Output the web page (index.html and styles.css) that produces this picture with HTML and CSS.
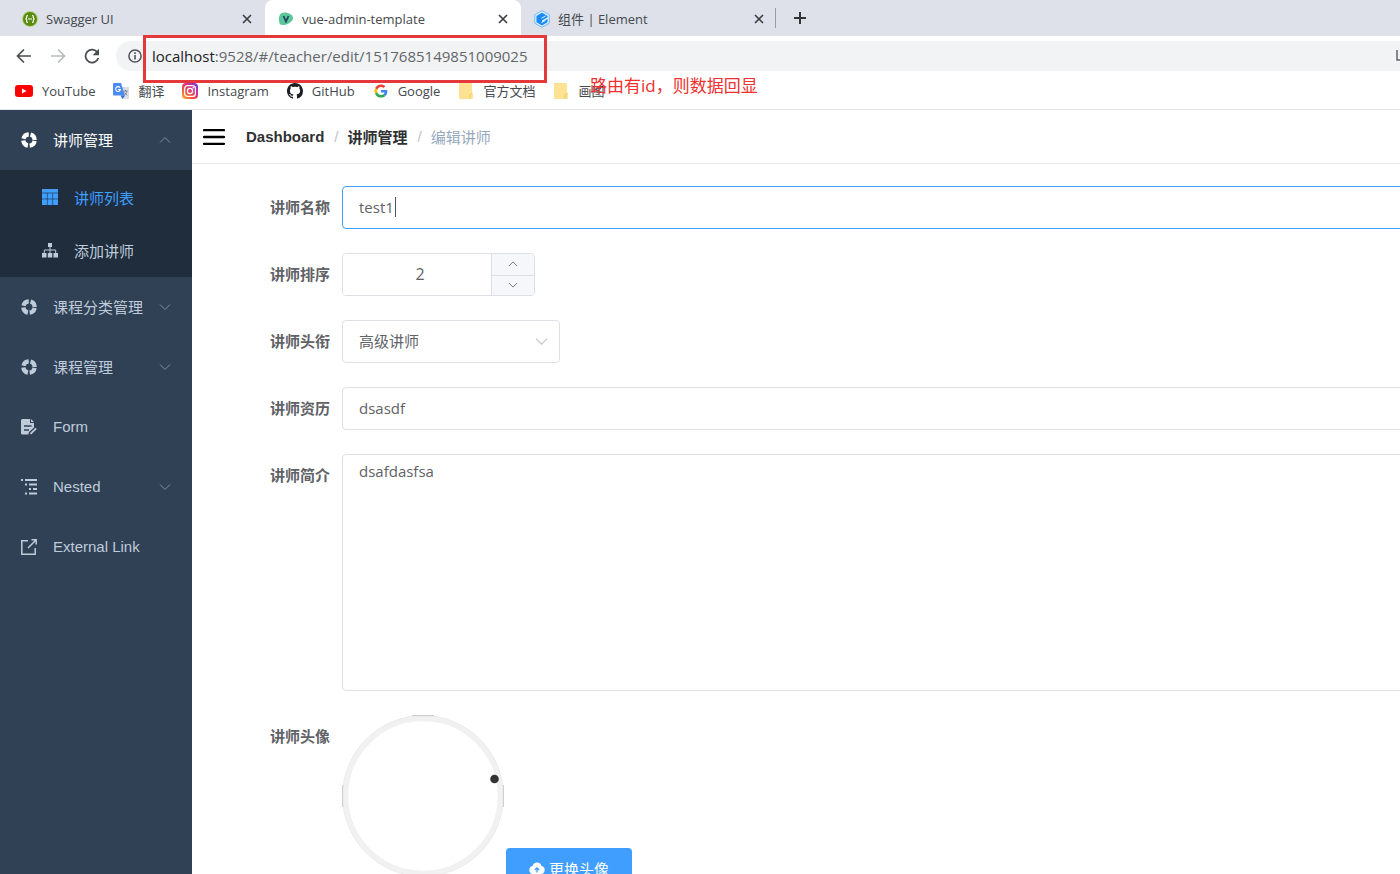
FILE: index.html
```html
<!DOCTYPE html>
<html lang="zh-CN">
<head>
<meta charset="utf-8">
<title>vue-admin-template</title>
<link rel="stylesheet" href="styles.css">
</head>
<body>
<svg class="sprite" aria-hidden="true">
  <symbol id="close" viewBox="0 0 10 10"><path d="M1 1l8 8M9 1L1 9" stroke="currentColor" stroke-width="1.7" fill="none"/></symbol>
  <symbol id="down" viewBox="0 0 12 12"><path d="M1 3.5l5 5 5-5" stroke="currentColor" fill="none"/></symbol>
  <symbol id="up" viewBox="0 0 12 12"><path d="M1 8.5l5-5 5 5" stroke="currentColor" fill="none"/></symbol>
  <symbol id="ring" viewBox="0 0 16 16"><circle cx="8" cy="8" r="5.7" fill="none" stroke="currentColor" stroke-width="4.2" stroke-dasharray="7.05 1.9" stroke-dashoffset="-.95"/></symbol>
  <symbol id="folder" viewBox="0 0 14 16"><path d="M1 0h11a1 1 0 0 1 1 1v9l1 1v4a1 1 0 0 1-1 1H1a1 1 0 0 1-1-1V1a1 1 0 0 1 1-1z" fill="#fde293"/><path d="M11 15.5v-3.500l2.500-2" fill="none" stroke="#eec65b"/></symbol>
</svg>
<div class="window">
  <header class="browser">
    <div class="tabs">
      <div class="tab">
        <svg class="favicon" viewBox="0 0 16 16"><circle cx="8" cy="8" r="7.800" fill="#a9cf54"/><circle cx="8" cy="8" r="7" fill="#5b8c12"/><path d="M6 4.500c-1.500 0-1.300.8-1.300 1.800S4.500 7.800 3.500 8c1 .2 1.200.7 1.200 1.700s-.2 1.800 1.300 1.800M10 4.500c1.500 0 1.300.8 1.300 1.800s.2 1.500 1.200 1.700c-1 .2-1.200.7-1.200 1.700s.2 1.800-1.300 1.800M6 8h4" stroke="#fff" stroke-width="1.200" fill="none"/></svg>
        <span class="tab-title">Swagger UI</span>
        <button class="tab-close" aria-label="Close"><svg><use href="#close"/></svg></button>
      </div>
      <div class="tab active">
        <svg class="favicon" viewBox="0 0 16 16"><path d="M3 2.500C5 1 9 1.500 12 3s3.500 4 2.500 6S10 13.500 6 14 1.500 13 1 10 1 4 3 2.500z" fill="#5cc79b"/><path d="M5.500 5L8 10.500 10.500 5" fill="none" stroke="#22485a" stroke-width="1.800"/></svg>
        <span class="tab-title">vue-admin-template</span>
        <button class="tab-close" aria-label="Close"><svg><use href="#close"/></svg></button>
      </div>
      <div class="tab">
        <svg class="favicon" viewBox="0 0 16 18"><path d="M8 .6l7.300 4.200v8.400L8 17.400.7 13.200V4.800z" fill="#d8edff" stroke="#5bb0f8" stroke-width=".8"/><path d="M8 2.800l5.500 3.100v1.300L8 10.400v1.700l5.500-3.200v2.700c0 .5-.2.7-.5.900L8 15.400l-5.500-3.200V5.900z" fill="#1989f6"/><path d="M7.500 8.300l4-2.300M7.500 12.700l4-2.300" stroke="#fff" stroke-width=".9"/></svg>
        <span class="tab-title">组件 | Element</span>
        <button class="tab-close" aria-label="Close"><svg><use href="#close"/></svg></button>
      </div>
      <button class="tab-add" aria-label="New tab"><svg viewBox="0 0 14 14"><path d="M7 1v12M1 7h12" stroke="#333" stroke-width="2"/></svg></button>
    </div>
    <div class="toolbar">
      <button class="nav-btn" aria-label="Back"><svg viewBox="0 0 16 16"><path d="M15 8H2M8 1.500L1.500 8 8 14.500" fill="none" stroke="#4a4d51" stroke-width="1.700"/></svg></button>
      <button class="nav-btn" aria-label="Forward"><svg viewBox="0 0 16 16"><path d="M1 8h13M8 1.500L14.500 8 8 14.500" fill="none" stroke="#b9bbbe" stroke-width="1.700"/></svg></button>
      <button class="nav-btn" aria-label="Reload"><svg viewBox="0 0 16 16"><path d="M13.500 4.500A6.500 6.500 0 1 0 14.300 10" fill="none" stroke="#4a4d51" stroke-width="1.800"/><path d="M15 .8v6.400H8.600z" fill="#4a4d51"/></svg></button>
      <div class="address">
        <svg class="info" viewBox="0 0 14 14"><circle cx="7" cy="7" r="6.100" fill="none" stroke="#505357" stroke-width="1.500"/><path d="M7 6v4.500M7 3.300v1.600" stroke="#505357" stroke-width="1.600"/></svg>
        <div class="url" role="textbox" aria-label="Address"><span class="host">localhost</span>:9528/#/teacher/edit/1517685149851009025</div>
        <svg class="share" viewBox="0 0 14 14"><path d="M1 1v10h12" fill="none" stroke="#5f6368" stroke-width="1.500"/></svg>
      </div>
      <div class="url-mark"></div>
    </div>
    <nav class="bookmarks">
      <a href="#"><svg class="mark wide" viewBox="0 0 18 12"><rect width="18" height="12" rx="3" fill="#f00"/><path d="M7 3.500v5L11.500 6z" fill="#fff"/></svg>YouTube</a>
      <a href="#"><svg class="mark" viewBox="0 0 16 16"><path d="M6 4h9a1 1 0 0 1 1 1v10a1 1 0 0 1-1 1h-5z" fill="#dadde2"/><path d="M1 0h7l4 12.500H1a1 1 0 0 1-1-1V1a1 1 0 0 1 1-1z" fill="#4c8bf5"/><path d="M7.500 12.500H12L9.500 16z" fill="#3367d6"/><path d="M7 4.600a2.400 2.400 0 1 0 .4 2H5.200" fill="none" stroke="#fff" stroke-width="1.100"/><path d="M10.500 8h4M12.500 7v1M14 8c-.3 2-1.500 3-2.500 4M11.500 9.500l2.500 2.800" stroke="#6d7783" stroke-width=".8" fill="none"/></svg>翻译</a>
      <a href="#"><svg class="mark" viewBox="0 0 16 16"><defs><linearGradient id="ig" x1="0" y1="1" x2="1" y2="0"><stop stop-color="#ffb52e"/><stop offset=".35" stop-color="#f4503a"/><stop offset=".65" stop-color="#d42d91"/><stop offset="1" stop-color="#6b3be0"/></linearGradient></defs><rect width="16" height="16" rx="4" fill="url(#ig)"/><rect x="2.600" y="2.600" width="10.800" height="10.800" rx="3" fill="none" stroke="#fff" stroke-width="1.300"/><circle cx="8" cy="8" r="2.600" fill="none" stroke="#fff" stroke-width="1.300"/><circle cx="11.200" cy="4.800" r=".8" fill="#fff"/></svg>Instagram</a>
      <a href="#"><svg class="mark" viewBox="0 0 16 16"><path fill="#1b1f23" d="M8 0C3.580 0 0 3.580 0 8c0 3.540 2.290 6.530 5.470 7.590.4.070.55-.17.55-.38 0-.19-.01-.82-.01-1.490-2.010.37-2.530-.49-2.690-.94-.09-.23-.48-.94-.82-1.130-.28-.15-.68-.52-.01-.53.630-.01 1.080.58 1.230.82.720 1.210 1.870.87 2.330.66.070-.52.280-.87.510-1.070-1.780-.2-3.640-.89-3.640-3.950 0-.87.310-1.590.82-2.150-.08-.2-.36-1.020.08-2.120 0 0 .67-.21 2.200.82.640-.18 1.320-.27 2-.27s1.360.09 2 .27c1.530-1.040 2.200-.82 2.200-.82.440 1.100.160 1.920.080 2.120.510.560.820 1.270.820 2.150 0 3.070-1.870 3.750-3.650 3.950.290.250.540.730.540 1.480 0 1.070-.01 1.930-.01 2.200 0 .210.150.460.550.380A8.010 8.010 0 0 0 16 8c0-4.420-3.580-8-8-8z"/></svg>GitHub</a>
      <a href="#"><svg class="mark" viewBox="-5 -5 58 58"><path fill="#ea4335" d="M24 9.500c3.540 0 6.710 1.220 9.210 3.600l6.850-6.850C35.900 2.380 30.470 0 24 0 14.620 0 6.510 5.380 2.560 13.220l7.980 6.190C12.430 13.720 17.740 9.500 24 9.500z"/><path fill="#4285f4" d="M46.980 24.550c0-1.570-.15-3.090-.38-4.550H24v9.020h12.940c-.58 2.960-2.260 5.480-4.780 7.180l7.730 6c4.510-4.180 7.090-10.360 7.090-17.650z"/><path fill="#fbbc05" d="M10.530 28.590A14.500 14.500 0 0 1 9.770 24c0-1.600.27-3.140.76-4.590l-7.980-6.190A23.900 23.900 0 0 0 0 24c0 3.880.92 7.540 2.560 10.780z"/><path fill="#34a853" d="M24 48c6.480 0 11.930-2.130 15.890-5.810l-7.730-6c-2.150 1.450-4.920 2.300-8.160 2.300-6.260 0-11.570-4.220-13.470-9.910l-7.980 6.190C6.510 42.620 14.620 48 24 48z"/></svg>Google</a>
      <a href="#"><svg class="mark"><use href="#folder"/></svg>官方文档</a>
      <a href="#"><svg class="mark"><use href="#folder"/></svg>画图</a>
      <span class="annotation">路由有id，则数据回显</span>
    </nav>
  </header>
  <div class="app">
    <aside class="sidebar">
      <a class="item open" href="#"><svg class="icon"><use href="#ring"/></svg><span>讲师管理</span><svg class="arrow"><use href="#up"/></svg></a>
      <div class="submenu">
        <a class="item current" href="#"><svg class="icon" viewBox="0 0 16 16"><path d="M0 0h16v16H0z" fill="currentColor"/><path d="M0 4h16M0 10h16M5.300 4v12M10.700 4v12" stroke="#1f2d3d" stroke-width=".6"/></svg><span>讲师列表</span></a>
        <a class="item" href="#"><svg class="icon" viewBox="0 0 16 16"><path d="M6 1h4v4H6zM0 11h4.500v4.500H0zM5.800 11h4.500v4.500H5.800zM11.500 11H16v4.500h-4.500z" fill="currentColor"/><path d="M8 5v6M2.300 11V8h11.400v3" fill="none" stroke="currentColor"/></svg><span>添加讲师</span></a>
      </div>
      <a class="item" href="#"><svg class="icon"><use href="#ring"/></svg><span>课程分类管理</span><svg class="arrow"><use href="#down"/></svg></a>
      <a class="item" href="#"><svg class="icon"><use href="#ring"/></svg><span>课程管理</span><svg class="arrow"><use href="#down"/></svg></a>
      <a class="item" href="#"><svg class="icon" viewBox="0 0 16 16"><path d="M1.500 0H9v4h4v4.500L8 13l-.6 2.500H1.500A1.500 1.500 0 0 1 0 14V1.500A1.500 1.500 0 0 1 1.500 0zM10 0l3 3h-3z" fill="currentColor"/><path d="M3 7h7.500M3 11h5" stroke="#304156" stroke-width="1.300"/><path d="M9.500 14.800l5.700-5.500" stroke="currentColor" stroke-width="1.800"/></svg><span>Form</span></a>
      <a class="item" href="#"><svg class="icon" viewBox="0 0 16 16"><path d="M0 1h2M4 1h12M4 5.500h2M8 5.500h8M8 10h2M12 10h4M4 14.500h2M8 14.500h8" stroke="currentColor" stroke-width="1.900"/></svg><span>Nested</span><svg class="arrow"><use href="#down"/></svg></a>
      <a class="item" href="#"><svg class="icon" viewBox="0 0 16 16"><path d="M7 1.800H.8v13.400h13.400V9M10.500.8h4.700v4.700M15 1L7 9" fill="none" stroke="currentColor" stroke-width="1.500"/></svg><span>External Link</span></a>
    </aside>
    <main class="main">
      <div class="navbar">
        <button class="hamburger" aria-label="Toggle sidebar"><svg viewBox="0 0 22 16"><path d="M1 1.200h20M1 8h20M1 14.800h20" stroke="#000" stroke-width="2.300" stroke-linecap="round"/></svg></button>
        <nav class="breadcrumb"><a href="#">Dashboard</a><i>/</i><a href="#">讲师管理</a><i>/</i><span>编辑讲师</span></nav>
      </div>
      <form class="form">
        <div class="row"><label for="name">讲师名称</label><div class="field"><input id="name" class="control focused" type="text" value="test1"><span class="caret"></span></div></div>
        <div class="row"><label for="sort">讲师排序</label><div class="number"><input id="sort" type="text" value="2"><div class="steps"><button type="button" aria-label="Increase"><svg><use href="#up"/></svg></button><button type="button" aria-label="Decrease"><svg><use href="#down"/></svg></button></div></div></div>
        <div class="row"><label for="level">讲师头衔</label><div class="select"><select id="level" class="control"><option>高级讲师</option></select><svg><use href="#down"/></svg></div></div>
        <div class="row"><label for="career">讲师资历</label><div class="field"><input id="career" class="control" type="text" value="dsasdf"></div></div>
        <div class="row"><label for="intro">讲师简介</label><div class="field"><textarea id="intro" class="control">dsafdasfsa</textarea></div></div>
        <div class="row"><label for="change">讲师头像</label><div class="avatar-row">
          <svg class="avatar" viewBox="0 0 162 162"><circle cx="81" cy="81" r="80.300" fill="none" stroke="#e4e4e4"/><circle cx="81" cy="81" r="77.500" fill="none" stroke="#f1f1f1" stroke-width="5.500"/><path d="M70 .6h22M.6 70v22M161.400 70v22" stroke="#ccc"/><circle cx="152.500" cy="64" r="4.300" fill="#333"/></svg>
          <button id="change" class="primary" type="button"><svg viewBox="0 0 16 14"><path d="M4 13a4 4 0 0 1-.5-7.900 4.600 4.600 0 0 1 9 0A4 4 0 0 1 12 13z" fill="#fff"/><path d="M8 11.500V7M5.800 9L8 6.800 10.200 9" fill="none" stroke="#409eff" stroke-width="1.300"/></svg>更换头像</button>
        </div></div>
      </form>
    </main>
  </div>
</div>
</body>
</html>
```
FILE: styles.css
```css
* { box-sizing: border-box; }
body { margin: 0; font-family: "Open Sans", "Noto Sans CJK SC", sans-serif; font-size: 15px; color: #606266; background: #fff; }
button { border: 0; padding: 0; background: none; font: inherit; color: inherit; display: grid; place-items: center; }
a { color: inherit; text-decoration: none; }
svg { display: block; flex: none; }
.sprite { position: absolute; width: 0; height: 0; }
.window { display: flex; flex-direction: column; height: 100vh; overflow: hidden; }

.browser { flex: none; border-bottom: 1px solid #e3e4e6; }
.tabs { display: flex; height: 36px; background: #dee1e9; font-size: 13px; color: #45494d; }
.tab { display: flex; align-items: center; gap: 8px; width: 256px; padding: 1px 13px 0 13px; }
.tab:first-child { width: 265px; padding-left: 22px; }
.tab.active { background: #fff; border-radius: 8px 8px 0 0; }
.favicon { width: 16px; height: 18px; }
.tab-title { flex: 1; white-space: nowrap; }
.tab-close svg { width: 10px; height: 10px; color: #3c4043; }
.tab-add { width: 48px; border-left: 1px solid #999ca2; height: 20px; margin: 8px 0 0 -2px; }
.tab-add svg { width: 14px; height: 14px; }
.toolbar { position: relative; display: flex; align-items: center; height: 38px; padding: 2px 0 0 16px; gap: 18px; }
.nav-btn svg { width: 16px; height: 16px; }
.address { display: flex; flex: 1; align-items: center; height: 30px; margin-left: -2px; padding-left: 12px; gap: 10px; background: #f1f3f4; border-radius: 15px 0 0 15px; overflow: hidden; }
.info { width: 14px; height: 14px; }
.url { flex: 1; color: #63676b; white-space: nowrap; }
.host { color: #202124; }
.share { width: 14px; height: 14px; margin-right: -10px; }
.url-mark { position: absolute; left: 143px; top: -1px; width: 404px; height: 48px; border: 3px solid #e5383b; }
.bookmarks { position: relative; display: flex; align-items: center; height: 35px; padding: 0 0 2px 15px; gap: 18px; font-size: 13px; color: #45494d; }
.bookmarks a { display: flex; align-items: center; gap: 9px; white-space: nowrap; }
.mark { width: 16px; height: 16px; }
.mark.wide { width: 18px; height: 12px; }
.annotation { position: absolute; left: 590px; top: 0; font-size: 17px; line-height: 24px; color: #ee3030; white-space: nowrap; }

.app { display: flex; flex: 1; min-height: 0; }
.sidebar { flex: none; width: 192px; background: #304156; color: #bfcbd9; font-family: "Liberation Sans", "Noto Sans CJK SC", sans-serif; }
.item { display: flex; align-items: center; height: 60px; padding: 0 21px 1px; gap: 16px; }
.item span { flex: 1; white-space: nowrap; }
.item.open { color: #fff; }
.icon { width: 16px; height: 16px; }
.arrow { width: 12px; height: 12px; color: #7f8c9c; }
.submenu { background: #1f2d3d; padding-top: 1px; }
.submenu .item { height: 53px; padding-left: 42px; }
.item.current { color: #409eff; }

.main { flex: 1; min-width: 0; }
.navbar { display: flex; align-items: center; height: 54px; padding-left: 11px; gap: 21px; border-bottom: 1px solid #e6e8eb; }
.hamburger svg { width: 22px; height: 16px; }
.breadcrumb { display: flex; align-items: center; font-family: "Liberation Sans", "Noto Sans CJK SC", sans-serif; color: #97a8be; }
.breadcrumb a { font-weight: 700; color: #303133; }
.breadcrumb i { font-style: normal; margin: 0 9px 0 10px; color: #c0c4cc; }
.form { display: flex; flex-direction: column; gap: 24px; padding-top: 22px; margin-right: -12px; }
.row { display: flex; align-items: flex-start; }
.row label { flex: none; width: 150px; padding-right: 12px; text-align: right; line-height: 43px; font-weight: 700; }
.field { position: relative; flex: 1; }
.control { display: block; width: 100%; height: 43px; margin: 0; padding: 0 16px 2px; border: 1px solid #dcdfe6; border-radius: 4px; background: #fff; font: inherit; color: #606266; outline: 0; resize: none; }
.focused { border-color: #409eff; }
.caret { position: absolute; left: 53px; top: 11px; width: 1px; height: 20px; background: #555; }
textarea.control { height: 237px; padding-top: 4px; line-height: 24px; }
.number { display: flex; width: 193px; height: 43px; border: 1px solid #dcdfe6; border-radius: 4px; overflow: hidden; }
.number input { flex: 1; min-width: 0; border: 0; padding: 0 0 2px 6px; text-align: center; font: inherit; font-size: 16px; color: inherit; }
.steps { display: grid; grid-template-rows: 1fr 1fr; width: 43px; border-left: 1px solid #dcdfe6; background: #f5f7fa; }
.steps button + button { border-top: 1px solid #dcdfe6; }
.steps svg { width: 10px; height: 10px; }
.select { position: relative; width: 218px; }
.select select { appearance: none; }
.select svg { position: absolute; right: 12px; top: 15px; width: 13px; height: 13px; color: #c0c4cc; }
.avatar-row { display: flex; align-items: flex-start; gap: 2px; }
.avatar { width: 162px; height: 162px; }
.primary { display: flex; align-items: center; justify-content: center; gap: 4px; width: 126px; height: 42px; margin-top: 133px; padding-bottom: 2px; background: #409eff; color: #fff; border-radius: 4px; }
.primary svg { width: 16px; height: 14px; }
```
